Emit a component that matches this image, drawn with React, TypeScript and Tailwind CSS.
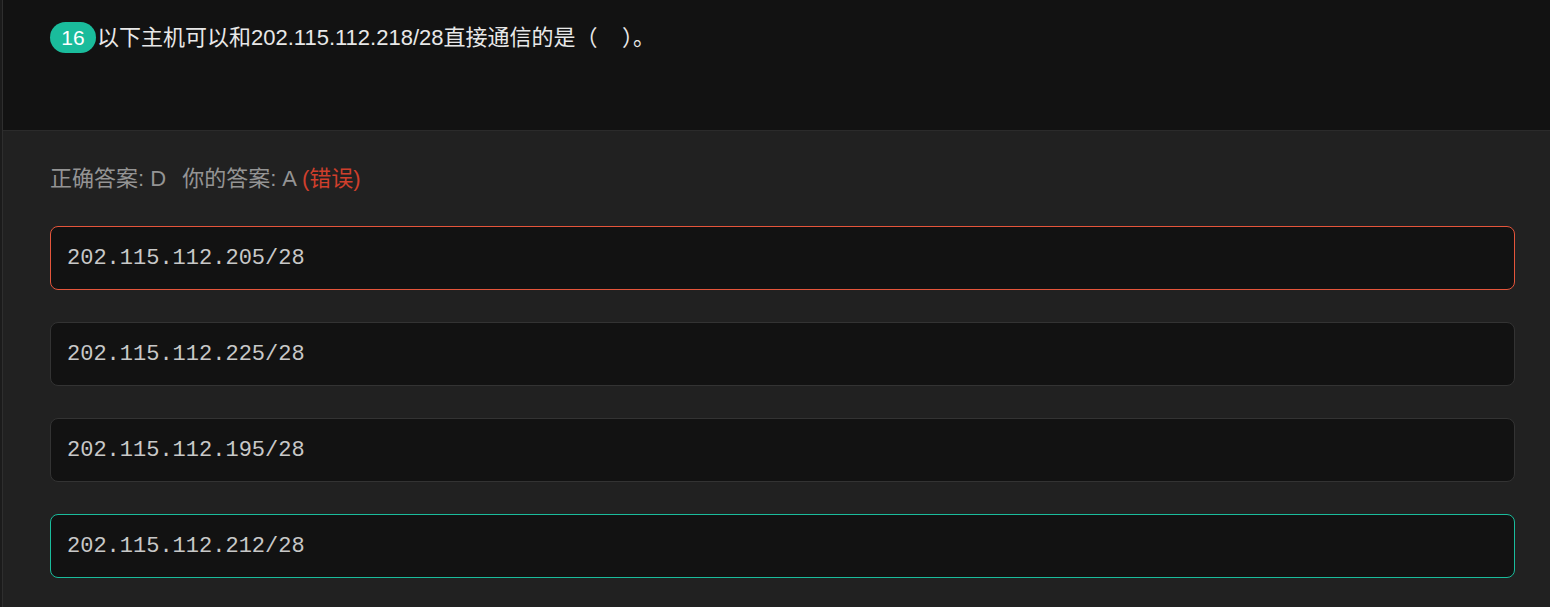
const options = [
  { text: '202.115.112.205/28', state: 'wrong' },
  { text: '202.115.112.225/28', state: 'none' },
  { text: '202.115.112.195/28', state: 'none' },
  { text: '202.115.112.212/28', state: 'right' },
];

const borderFor = (state: string) => {
  if (state === 'wrong') return 'border-[#e5553b]';
  if (state === 'right') return 'border-[#1abc9c]';
  return 'border-[#333333]';
};

export default function App() {
  return (
    <div
      className="min-h-screen bg-[#1b1b1b] pl-[2px]"
      style={{ fontFamily: '"Liberation Sans", "Noto Sans CJK SC", sans-serif' }}
    >
      <div className="min-h-screen border-l border-[#2e2e2e]">
        {/* Question */}
        <div className="h-[130px] bg-[#121212] pl-[47px] pt-[22px]">
          <div className="flex items-center">
            <span className="flex h-[31px] w-[46px] items-center justify-center rounded-full bg-[#1abc9c] text-[21px] text-white">
              16
            </span>
            <span className="ml-px text-[22px] leading-[30px] text-[#e8e8e8]">
              以下主机可以和202.115.112.218/28直接通信的是（&nbsp;&nbsp;&nbsp;&nbsp;）。
            </span>
          </div>
        </div>

        {/* Answer + options */}
        <div className="border-t border-[#2b2b2b] bg-[#212121] pb-8 pl-[47px] pr-[35px] pt-[34px]">
          <div className="text-[22px] leading-[28px] text-[#949494]">
            正确答案: D<span className="ml-[16px]">你的答案: A</span>{' '}
            <span className="text-[#cf3f2c]">(错误)</span>
          </div>
          <div className="mt-[33px] flex flex-col gap-8">
            {options.map((o) => (
              <div
                key={o.text}
                className={`flex h-16 items-center rounded-lg border bg-[#121212] px-4 ${borderFor(o.state)}`}
              >
                <span
                  className="text-[22px] text-[#c8c8c8]"
                  style={{ fontFamily: '"Liberation Mono", monospace' }}
                >
                  {o.text}
                </span>
              </div>
            ))}
          </div>
        </div>
      </div>
    </div>
  );
}
